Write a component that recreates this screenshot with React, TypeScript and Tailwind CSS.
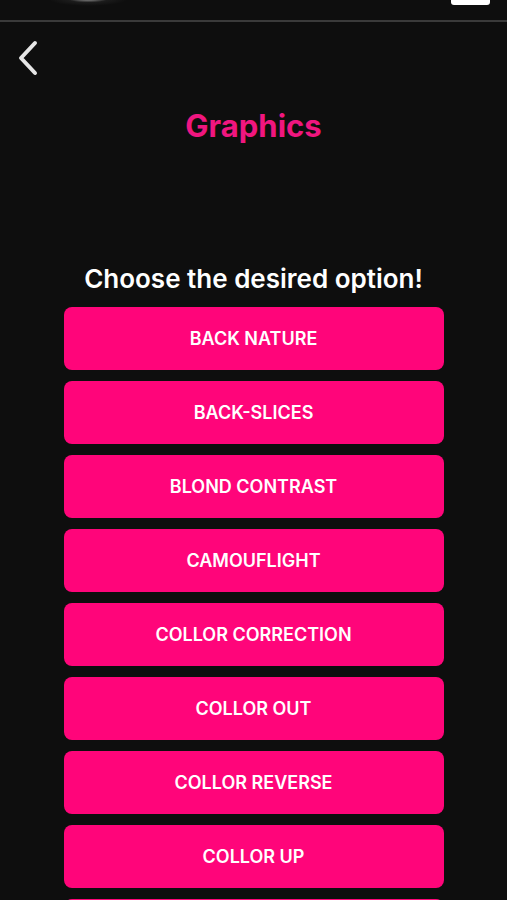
import React from "react";

const options = [
  "BACK NATURE",
  "BACK-SLICES",
  "BLOND CONTRAST",
  "CAMOUFLIGHT",
  "COLLOR CORRECTION",
  "COLLOR OUT",
  "COLLOR REVERSE",
  "COLLOR UP",
  "",
];

export default function App() {
  return (
    <div
      className="w-[507px] h-[900px] overflow-hidden bg-[#0e0e0e] flex flex-col"
      style={{ fontFamily: "Inter, 'Noto Sans', sans-serif" }}
    >
      <div className="relative h-[20px] shrink-0">
        <div className="absolute left-[48px] top-[-8px] w-[80px] h-[14px] rounded-full bg-[radial-gradient(ellipse_at_center,_rgba(255,255,255,1)_0%,_rgba(220,220,220,0.5)_10%,_rgba(90,90,90,0.18)_35%,_transparent_70%)]" />
        <div className="absolute left-[451px] top-0 w-[39px] h-[5px] rounded-b-[3px] bg-white" />
      </div>
      <div className="h-[2px] shrink-0 bg-[#3a3a3a]" />
      <div className="h-[18px] shrink-0" />
      <div className="pl-[17px] h-[36px] shrink-0 flex items-center">
        <svg width="22" height="36" viewBox="0 0 22 36" fill="none">
          <path d="M18 3 L4 18 L18 33" stroke="#e6e6e6" strokeWidth="4" strokeLinecap="round" strokeLinejoin="round" />
        </svg>
      </div>
      <h1 className="mt-[32px] text-center text-[31px] leading-[36px] font-bold text-[#f0167f]">
        Graphics
      </h1>
      <p className="mt-[119px] text-center text-[26px] leading-[32px] font-semibold text-white">
        Choose the desired option!
      </p>
      <div className="mt-[12px] flex flex-col items-center gap-[11px]">
        {options.map((o, i) => (
          <button
            key={i}
            className="w-[380px] h-[63px] shrink-0 rounded-[8px] bg-[#ff057a] text-white text-[18px] font-semibold flex items-center justify-center"
          >
            {o}
          </button>
        ))}
      </div>
    </div>
  );
}
